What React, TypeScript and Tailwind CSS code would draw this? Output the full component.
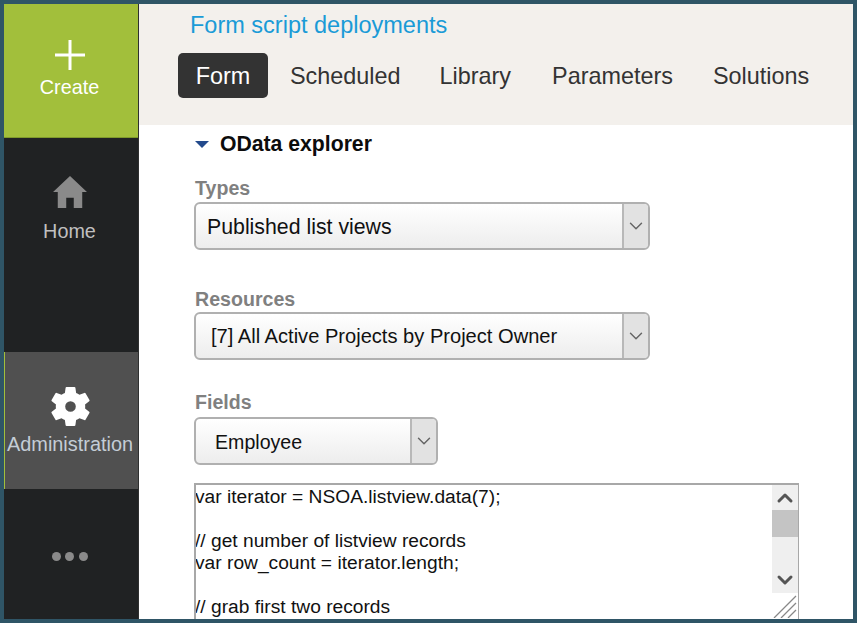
import { ChevronDown, ChevronUp } from 'lucide-react';

const font = "font-['Liberation_Sans',Arial,sans-serif]";

type SelectProps = {
  label: string;
  value: string;
  width: string;
  labelTop: string;
  boxTop: string;
  textPad: string;
  textSize: string;
};

function Select({ label, value, width, labelTop, boxTop, textPad, textSize }: SelectProps) {
  return (
    <div className={labelTop}>
      <div className="text-[19.6px] leading-[24px] font-bold text-[#808080] pl-[1px]">{label}</div>
      <div className={`${width} ${boxTop} h-[48px] flex rounded-[6px] border-2 border-[#b0b0b0] overflow-hidden bg-gradient-to-b from-white to-[#ededed]`}>
        <div className={`flex-1 flex items-center ${textPad} ${textSize} text-[#111]`}>{value}</div>
        <div className="w-[26px] flex items-center justify-center bg-[#e2e2e2] border-l-2 border-[#b8b8b8]">
          <ChevronDown className="w-[22px] h-[22px] text-[#666]" strokeWidth={1.6} />
        </div>
      </div>
    </div>
  );
}

export default function App() {
  return (
    <div className={`${font} w-[857px] h-[623px] overflow-hidden border-4 border-[#2f5566] bg-white flex`}>
      {/* Left nav */}
      <nav className="w-[135px] shrink-0 flex flex-col bg-[#202223] border-r border-[#2f3030]">
        <div className="h-[134px] bg-[#a2bf3b] border-b border-[#7f9a2c] flex flex-col items-center pt-[36px] pr-[3px] text-white">
          <svg width="30" height="30" viewBox="0 0 30 30" fill="white">
            <rect x="13.5" y="0" width="3" height="30" />
            <rect x="0" y="13.5" width="30" height="3" />
          </svg>
          <span className="text-[19.8px] leading-[24px] mt-[5px]">Create</span>
        </div>
        <div className="h-[214px] flex flex-col items-center pt-[38px] pr-[3px] text-[#c0c0c0]">
          <svg width="34" height="32" viewBox="0 0 36 34" fill="#8a8a8a">
            <path d="M18 0 L36 17 L31 17 L31 34 L22 34 L22 23 L14 23 L14 34 L5 34 L5 17 L0 17 Z" />
          </svg>
          <span className="text-[19.8px] leading-[24px] mt-[11px]">Home</span>
        </div>
        <div className="h-[137px] bg-[#505050] border-l border-[#a2bf3b] flex flex-col items-center pt-[30px] pr-[3px] text-[#c4cdd6]">
          <svg width="49" height="49" viewBox="0 0 24 24" fill="white">
            <path
              fillRule="evenodd"
              d="M19.14 12.94c.04-.3.06-.61.06-.94s-.02-.64-.07-.94l2.03-1.58a.49.49 0 0 0 .12-.61l-1.92-3.32a.49.49 0 0 0-.59-.22l-2.39.96a7 7 0 0 0-1.62-.94l-.36-2.54a.48.48 0 0 0-.48-.41h-3.84a.48.48 0 0 0-.47.41l-.36 2.54c-.59.24-1.13.56-1.62.94l-2.39-.96a.49.49 0 0 0-.59.22L2.74 8.87a.47.47 0 0 0 .12.61l2.03 1.58c-.05.3-.09.63-.09.94s.02.64.07.94l-2.03 1.58a.49.49 0 0 0-.12.61l1.92 3.32c.12.22.37.29.59.22l2.39-.96c.5.38 1.03.7 1.62.94l.36 2.54c.05.24.24.41.48.41h3.84c.24 0 .44-.17.47-.41l.36-2.54c.59-.24 1.13-.56 1.62-.94l2.39.96c.22.08.47 0 .59-.22l1.92-3.32a.47.47 0 0 0-.12-.61l-2.01-1.58ZM12 14.6a2.6 2.6 0 1 1 0-5.2 2.6 2.6 0 0 1 0 5.2Z"
            />
          </svg>
          <span className="text-[19.9px] leading-[24px] mt-[1px]">Administration</span>
        </div>
        <div className="flex-1 flex justify-center gap-[4.5px] pt-[63px] pr-[3px]">
          <span className="w-[9px] h-[9px] rounded-full bg-[#8a8a8a]" />
          <span className="w-[9px] h-[9px] rounded-full bg-[#8a8a8a]" />
          <span className="w-[9px] h-[9px] rounded-full bg-[#8a8a8a]" />
        </div>
      </nav>

      <div className="flex-1 min-w-0 flex flex-col">
        {/* Header with tabs */}
        <header className="h-[121px] shrink-0 bg-[#f3f0ec] pl-[39px]">
          <div className="text-[23.5px] leading-[28px] pl-[12px] pt-[7px] text-[#1a9bd7]">Form script deployments</div>
          <div className="mt-[14px] flex items-start text-[23.4px] text-[#333] leading-[47px]">
            <span className="w-[90px] h-[45px] rounded-[5px] bg-[#333333] text-white text-center">Form</span>
            <span className="ml-[22px]">Scheduled</span>
            <span className="ml-[39px]">Library</span>
            <span className="ml-[41px]">Parameters</span>
            <span className="ml-[40px]">Solutions</span>
          </div>
        </header>

        {/* OData explorer */}
        <main className="flex-1 min-h-0 pl-[55px] overflow-hidden">
          <div className="flex items-center h-[28px] mt-[5px]">
            <span className="w-0 h-0 border-x-[7px] border-x-transparent border-t-[7px] border-t-[#234a8c] ml-[1px]" />
            <span className="ml-[11px] text-[21.2px] font-bold text-[#0c0c0c]">OData explorer</span>
          </div>
          <Select labelTop="mt-[18px]" boxTop="mt-[2px]" label="Types" value="Published list views" width="w-[456px]" textPad="pl-[11px] pt-[3px]" textSize="text-[21.3px]" />
          <Select labelTop="mt-[37px]" boxTop="mt-[1px]" label="Resources" value="[7] All Active Projects by Project Owner" width="w-[456px]" textPad="pl-[15px]" textSize="text-[20.1px]" />
          <Select labelTop="mt-[30px]" boxTop="mt-[3px]" label="Fields" value="Employee" width="w-[244px]" textPad="pl-[19px] pt-[3px]" textSize="text-[19.6px]" />

          <div className="relative mt-[18px] w-[605px] h-[140px] border-2 border-r border-[#a8a8a8] border-b-0 overflow-hidden text-[19.2px] leading-[22px] text-[#111] whitespace-pre">
            <div className="mt-[1px] -ml-[1px]">{'var iterator = NSOA.listview.data(7);\n\n// get number of listview records\nvar row_count = iterator.length;\n\n// grab first two records'}</div>
            <div className="absolute right-0 top-0 w-[26px] h-[108px] bg-[#efefef] flex flex-col items-center">
              <div className="h-[25px] flex items-center"><ChevronUp className="w-[24px] h-[24px] text-[#555]" strokeWidth={3} /></div>
              <div className="w-full h-[27px] bg-[#c4c4c4]" />
              <div className="flex-1" />
              <div className="h-[26px] flex items-center"><ChevronDown className="w-[24px] h-[24px] text-[#555]" strokeWidth={3} /></div>
            </div>
            <svg className="absolute right-[1px] bottom-[5px] w-[24px] h-[24px]" viewBox="0 0 24 24" stroke="#888" strokeWidth="1.3">
              <path d="M1 24 L23 2 M8 24 L23 9 M15 24 L23 16" />
            </svg>
          </div>
        </main>
      </div>
    </div>
  );
}
